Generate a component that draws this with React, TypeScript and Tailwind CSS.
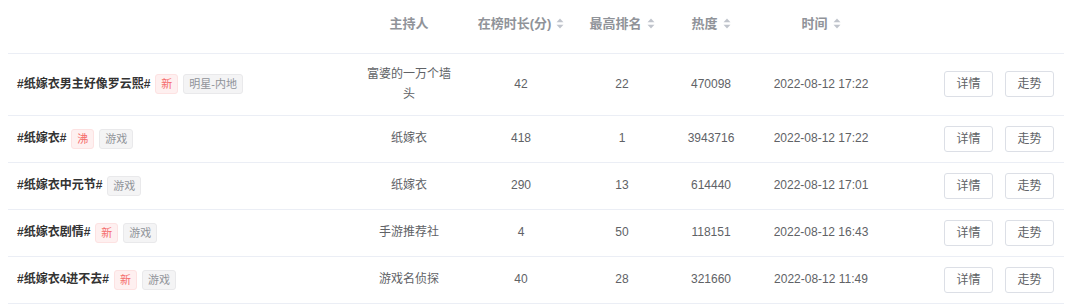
import React from 'react';

interface HotItem {
  title: string;
  tags: { text: string; kind: 'hot' | 'cat' }[];
  host: string;
  duration: number;
  rank: number;
  heat: number;
  time: string;
}

const rows: HotItem[] = [
  {
    title: '#纸嫁衣男主好像罗云熙#',
    tags: [
      { text: '新', kind: 'hot' },
      { text: '明星-内地', kind: 'cat' },
    ],
    host: '富婆的一万个墙头',
    duration: 42,
    rank: 22,
    heat: 470098,
    time: '2022-08-12 17:22',
  },
  {
    title: '#纸嫁衣#',
    tags: [
      { text: '沸', kind: 'hot' },
      { text: '游戏', kind: 'cat' },
    ],
    host: '纸嫁衣',
    duration: 418,
    rank: 1,
    heat: 3943716,
    time: '2022-08-12 17:22',
  },
  {
    title: '#纸嫁衣中元节#',
    tags: [{ text: '游戏', kind: 'cat' }],
    host: '纸嫁衣',
    duration: 290,
    rank: 13,
    heat: 614440,
    time: '2022-08-12 17:01',
  },
  {
    title: '#纸嫁衣剧情#',
    tags: [
      { text: '新', kind: 'hot' },
      { text: '游戏', kind: 'cat' },
    ],
    host: '手游推荐社',
    duration: 4,
    rank: 50,
    heat: 118151,
    time: '2022-08-12 16:43',
  },
  {
    title: '#纸嫁衣4进不去#',
    tags: [
      { text: '新', kind: 'hot' },
      { text: '游戏', kind: 'cat' },
    ],
    host: '游戏名侦探',
    duration: 40,
    rank: 28,
    heat: 321660,
    time: '2022-08-12 11:49',
  },
];

const SortIcon = () => (
  <svg width="8" height="11" viewBox="0 0 8 11" className="ml-[5px] inline-block">
    <path d="M4 0.5 L7.5 4.2 H0.5 Z" fill="#c0c4cc" />
    <path d="M4 10.5 L7.5 6.8 H0.5 Z" fill="#c0c4cc" />
  </svg>
);

const HeadCell = ({ label, sortable }: { label: string; sortable?: boolean }) => (
  <th className="h-[53px] pb-[6px] px-[10px] align-middle text-center font-semibold text-[13px] text-[#909399]">
    <span className="inline-flex items-center">
      {label}
      {sortable && <SortIcon />}
    </span>
  </th>
);

export default function App() {
  return (
    <div
      className="w-[1080px] h-[304px] bg-white px-[8px] overflow-hidden"
      style={{ fontFamily: '"Liberation Sans", "Noto Sans CJK SC", sans-serif' }}
    >
      <table className="w-[1056px] table-fixed">
        <colgroup>
          <col className="w-[347px]" />
          <col className="w-[108px]" />
          <col className="w-[116px]" />
          <col className="w-[86px]" />
          <col className="w-[92px]" />
          <col className="w-[128px]" />
          <col className="w-[179px]" />
        </colgroup>
        <thead>
          <tr className="border-b border-[#ebeef5]">
            <th className="h-[53px]" />
            <HeadCell label="主持人" />
            <HeadCell label="在榜时长(分)" sortable />
            <HeadCell label="最高排名" sortable />
            <HeadCell label="热度" sortable />
            <HeadCell label="时间" sortable />
            <th />
          </tr>
        </thead>
        <tbody>
          {rows.map((r) => (
            <tr key={r.title} className="border-b border-[#ebeef5] text-[12px] text-[#606266] leading-[20.5px]">
              <td className="py-[10px] pl-[9px] pr-[10px] align-middle">
                <div className="flex items-center gap-[5px]">
                  <span className="text-[12px] font-bold text-[#333333]">{r.title}</span>
                  {r.tags.map((t) => (
                    <span
                      key={t.text}
                      className={
                        t.kind === 'hot'
                          ? 'h-[20px] px-[5px] rounded-[3px] border border-[#fde2e2] bg-[#fef0f0] text-[#f56c6c] text-[11px] leading-[18px]'
                          : 'h-[20px] px-[5px] rounded-[3px] border border-[#e9e9eb] bg-[#f4f4f5] text-[#909399] text-[11px] leading-[18px]'
                      }
                    >
                      {t.text}
                    </span>
                  ))}
                </div>
              </td>
              <td className="py-[10px] px-[10px] text-center align-middle">{r.host}</td>
              <td className="py-[10px] px-[10px] text-center align-middle">{r.duration}</td>
              <td className="py-[10px] px-[10px] text-center align-middle">{r.rank}</td>
              <td className="py-[10px] px-[10px] text-center align-middle">{r.heat}</td>
              <td className="py-[10px] px-[4px] text-center align-middle">{r.time}</td>
              <td className="py-[10px] pr-[10px] align-middle">
                <div className="flex justify-end gap-[12px]">
                  <button className="h-[26px] w-[49px] rounded-[3px] border border-[#dcdfe6] bg-white text-[12px] text-[#606266] leading-[24px]">
                    详情
                  </button>
                  <button className="h-[26px] w-[49px] rounded-[3px] border border-[#dcdfe6] bg-white text-[12px] text-[#606266] leading-[24px]">
                    走势
                  </button>
                </div>
              </td>
            </tr>
          ))}
        </tbody>
      </table>
    </div>
  );
}
